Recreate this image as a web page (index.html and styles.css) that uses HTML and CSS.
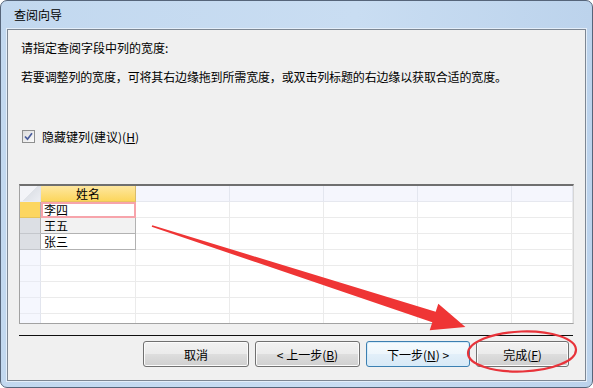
FILE: index.html
```html
<!DOCTYPE html>
<html>
<head>
<meta charset="utf-8" />
<title>查阅向导</title>
<link rel="stylesheet" href="styles.css">
</head>
<body>
<div class="window">
	<div class="titlebar">查阅向导</div>
	<div class="client">
		<p class="prompt">请指定查阅字段中列的宽度:</p>
		<p class="hint">若要调整列的宽度，可将其右边缘拖到所需宽度，或双击列标题的右边缘以获取合适的宽度。</p>

		<label class="check">
			<span class="box"><svg width="11" height="11" viewBox="0 0 11 11"><path d="M2 5.5 L4.5 8.2 L9 2.2" fill="none" stroke="#4a5d9c" stroke-width="1.7"/></svg></span>
			<span class="label">隐藏键列(建议)(<u>H</u>)</span>
		</label>

		<div class="sheet">
			<div class="cell sel corner"></div><div class="cell head name">姓名</div><div class="cell head"></div><div class="cell head"></div><div class="cell head"></div><div class="cell head"></div><div class="cell head"></div>
			<div class="cell sel active"></div><div class="cell data current">李四</div><div class="cell"></div><div class="cell"></div><div class="cell"></div><div class="cell"></div><div class="cell"></div>
			<div class="cell sel used"></div><div class="cell data alt">王五</div><div class="cell"></div><div class="cell"></div><div class="cell"></div><div class="cell"></div><div class="cell"></div>
			<div class="cell sel used"></div><div class="cell data">张三</div><div class="cell"></div><div class="cell"></div><div class="cell"></div><div class="cell"></div><div class="cell"></div>
			<div class="cell sel"></div><div class="cell"></div><div class="cell"></div><div class="cell"></div><div class="cell"></div><div class="cell"></div><div class="cell"></div>
			<div class="cell sel"></div><div class="cell"></div><div class="cell"></div><div class="cell"></div><div class="cell"></div><div class="cell"></div><div class="cell"></div>
			<div class="cell sel"></div><div class="cell"></div><div class="cell"></div><div class="cell"></div><div class="cell"></div><div class="cell"></div><div class="cell"></div>
			<div class="cell sel"></div><div class="cell"></div><div class="cell"></div><div class="cell"></div><div class="cell"></div><div class="cell"></div><div class="cell"></div>
			<div class="cell sel"></div><div class="cell"></div><div class="cell"></div><div class="cell"></div><div class="cell"></div><div class="cell"></div><div class="cell"></div>
		</div>

		<hr class="sep">

		<div class="buttons">
			<button class="btn cancel">取消</button>
			<button class="btn back">&lt; 上一步(<u>B</u>)</button>
			<button class="btn next default">下一步(<u>N</u>) &gt;</button>
			<button class="btn finish">完成(<u>F</u>)</button>
		</div>
	</div>
</div>

<!-- red annotation drawn over the dialog -->
<svg class="marks" width="593" height="388" viewBox="0 0 593 388">
	<polygon fill="#ef3535" points="152.3,225.2 435.7,311.8 438.3,303.7 465.4,327.1 429.7,330.3 432.3,322.2 151.7,226.8"/>
	<ellipse cx="522" cy="351.5" rx="54" ry="20" fill="none" stroke="#e8333a" stroke-width="2.2" transform="rotate(-2 522 351.5)"/>
</svg>
</body>
</html>
```

FILE: styles.css
```css
body {
	margin: 0;
	width: 593px;
	height: 388px;
	overflow: hidden;
	position: relative;
	font-family: "Noto Sans CJK SC", "Liberation Sans", sans-serif;
	font-size: 12px;
	color: #000;
}
.window {
	box-sizing: border-box;
	width: 593px;
	height: 388px;
	border: 1px solid #56657a;
	border-radius: 7px;
	background: linear-gradient(to right, #c2d8ef, #c9ddf2 60%, #bcd3ec);
	padding: 0 6px 6px;
	display: flex;
	flex-direction: column;
}
.titlebar {
	height: 28px;
	line-height: 28px;
	padding-left: 7px;
	flex: none;
}
.client {
	flex: 1;
	background: #f0f0f0;
	border: 1px solid #7d8793;
	box-shadow: 0 0 0 1px #e4eef9;
	padding: 0 11px;
	display: flex;
	flex-direction: column;
}
.prompt {
	margin: 10px 0 0 2px;
	line-height: 16px;
}
.hint {
	margin: 13px 0 0 2px;
	line-height: 16px;
	letter-spacing: -0.15px;
	white-space: nowrap;
}
.check {
	margin: 43px 0 0 3px;
	height: 16px;
	display: flex;
	align-items: center;
	gap: 7px;
}
.box {
	box-sizing: border-box;
	width: 13px;
	height: 13px;
	border: 1px solid #8e8f8f;
	background: linear-gradient(135deg, #dcdcdc, #fbfbfb);
	display: flex;
	align-items: center;
	justify-content: center;
}
.box svg { display: block; }

/* datasheet */
.sheet {
	margin-top: 40px;
	box-sizing: border-box;
	width: 555px;
	height: 140px;
	overflow: hidden;
	border: 1px solid #a2a2a2;
	border-top: 2px solid #6f6f6f;
	border-right-color: #d6d6d6;
	background: #fff;
	display: grid;
	grid-template-columns: 21px 95px 94px 94px 94px 94px 1fr;
	grid-auto-rows: 16px;
}
.cell {
	box-sizing: border-box;
	border-right: 1px solid #ebebeb;
	border-bottom: 1px solid #ebebeb;
	line-height: 15px;
	padding-left: 3px;
	white-space: nowrap;
}
.sel {
	background: #f5f7fe;
	border-right-color: #e2e5ee;
	border-bottom-color: #e9ebf2;
}
.sel.corner {
	background: linear-gradient(135deg, #f3f4f8 50%, #dfe2e8 50%, #eceef3 100%);
	border-right-color: #dfe2ea;
}
.sel.active {
	background: #fcd660;
	border-bottom-color: #e6c45a;
	border-right-color: #b0b0b0;
}
.sel.used {
	background: #dcdfe4;
	border-right-color: #b0b0b0;
	border-bottom-color: #c4c7cc;
}
.head {
	background: #f5f6fd;
	border-right-color: #e3e6ef;
	border-bottom-color: #e6e8ef;
}
.head.name {
	background: linear-gradient(#fee7a0, #fcd65c);
	border-right-color: #d8bb6a;
	border-bottom-color: #e8c560;
	text-align: center;
	padding-left: 0;
}
.data {
	border-right-color: #b2b2b2;
	border-bottom-color: #b2b2b2;
}
.data.alt { background: #f2f2f2; }
.data.current {
	border-right: 2px solid #f7a4ab;
	border-bottom: 2px solid #f7a4ab;
	box-shadow: inset 2px 2px 0 #f7a4ab;
	line-height: 14px;
	padding-top: 1px;
}

.sep {
	margin: 11px 0 0;
	border: 0;
	height: 1px;
	width: 554px;
	background: #101010;
}

/* buttons */
.buttons {
	margin-top: 5px;
	display: flex;
	justify-content: flex-end;
	gap: 6px;
	padding-right: 5px;
}
.btn {
	box-sizing: border-box;
	height: 26px;
	width: 105px;
	font-family: inherit;
	font-size: 12px;
	color: #000;
	padding: 0;
	border: 1px solid #707070;
	border-radius: 3px;
	background: linear-gradient(#f2f2f2, #ebebeb 48%, #dddddd 52%, #cfcfcf);
	box-shadow: inset 0 0 0 1px #fbfbfb;
}
.btn.cancel { width: 106px; }
.btn.next { width: 104px; }
.btn.finish { width: 93px; }
.btn.default {
	border-color: #3c7fb1;
	background: linear-gradient(#f6fbfe, #eef6fc 48%, #e2eff9 52%, #d8e9f6);
	box-shadow: inset 0 0 0 1px #d6ecfa;
}

.marks {
	position: absolute;
	left: 0;
	top: 0;
	pointer-events: none;
}
```
